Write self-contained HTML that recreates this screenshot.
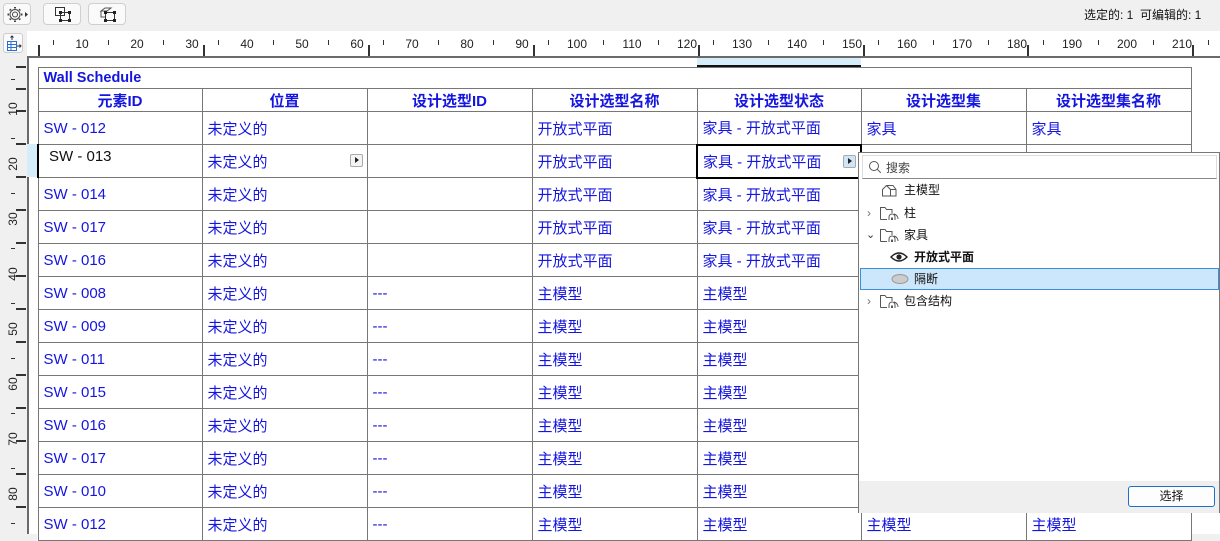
<!DOCTYPE html>
<html><head><meta charset="utf-8">
<style>
*{margin:0;padding:0;box-sizing:border-box}
body{width:1220px;height:534px;overflow:hidden;background:#f0f0f0;font-family:"Liberation Sans","Noto Sans CJK SC",sans-serif;position:relative}
.a{position:absolute}
.btn{position:absolute;top:3px;height:22px;border:1px solid #cfcfcf;border-radius:4px;background:#fafafa}
.rl{position:absolute;top:37px;font-size:12px;color:#222;width:30px;text-align:center}
.tk{position:absolute;background:#333}
.vl{position:absolute;font-size:12px;color:#222;transform:rotate(-90deg);width:24px;text-align:center}
table{position:absolute;left:37px;top:67px;border-collapse:collapse;table-layout:fixed;background:#fff}
td{border:1px solid #777;color:#1515e0;font-size:15px;padding:0 0 0 5px;white-space:nowrap;overflow:hidden;height:33px;vertical-align:middle;position:relative}
tr.h td{height:23px;font-weight:bold;text-align:center;padding:0}
tr.t td{height:21px;font-weight:bold;font-size:14.5px}
.arr{position:absolute;right:4px;top:9px;width:13px;height:13px;border:1px solid #aaa;border-radius:2px;background:#f4f4f4}
.arr:after{content:"";position:absolute;left:4px;top:2px;border-left:4px solid #222;border-top:3.5px solid transparent;border-bottom:3.5px solid transparent}
.pop{position:absolute;left:858px;top:152px;width:362px;height:361px;background:#fff;border:1px solid #777}
.it{position:absolute;left:0;width:360px;height:22px;font-size:12px;color:#111;line-height:22px}
</style></head><body>
<div class="btn" style="left:3px;width:28px"><svg class="a" style="left:3px;top:2px" width="22" height="17" viewBox="0 0 22 17"><circle cx="8" cy="8.5" r="2.5" fill="none" stroke="#444"/><path d="M8 2.5v-1.5M8 14.5v1.5M2 8.5h-1.5M14 8.5h1.5M3.8 4.3l-1-1M12.2 12.7l1 1M3.8 12.7l-1 1M12.2 4.3l1-1" stroke="#444" stroke-width="2"/><circle cx="8" cy="8.5" r="5" fill="none" stroke="#444"/><path d="M18 6l3 2.5-3 2.5z" fill="#333"/></svg></div>
<div class="btn" style="left:43px;width:38px"><svg class="a" style="left:10px;top:2px" width="18" height="17"><rect x="1.5" y="1.5" width="9" height="8" fill="none" stroke="#333"/><rect x="6.5" y="6.5" width="9" height="8" fill="none" stroke="#333"/><rect x="5" y="5" width="3" height="3" fill="#222"/><rect x="14" y="5" width="3" height="3" fill="#222"/><rect x="5" y="13" width="3" height="3" fill="#222"/><rect x="14" y="13" width="3" height="3" fill="#222"/></svg></div>
<div class="btn" style="left:88px;width:38px"><svg class="a" style="left:10px;top:2px" width="18" height="17"><path d="M2 5l4-3h6l-4 3z M2 5v6h5" fill="none" stroke="#555"/><rect x="6.5" y="6.5" width="9" height="8" fill="none" stroke="#333"/><rect x="5" y="5" width="3" height="3" fill="#222"/><rect x="14" y="5" width="3" height="3" fill="#222"/><rect x="5" y="13" width="3" height="3" fill="#222"/><rect x="14" y="13" width="3" height="3" fill="#222"/></svg></div>
<div class="a" style="left:1084px;top:6px;font-size:12px;color:#111">选定的: 1&nbsp; 可编辑的: 1</div>
<div class="a" style="left:27px;top:31px;width:1193px;height:26px;background:#fff"></div>
<div class="a" style="left:3px;top:33px;width:20px;height:20px;border:1px solid #ccc;border-radius:3px;background:#fafafa"><svg class="a" style="left:2px;top:1px" width="16" height="17"><path d="M6 1v4M4.5 2.5L6 1l1.5 1.5" stroke="#333" fill="none"/><rect x="1.5" y="6.5" width="9" height="9" fill="#fff" stroke="#2a6fd6"/><path d="M1.5 9.5h9M1.5 12.5h9M5 6.5v9" stroke="#2a6fd6"/><path d="M11 11h4M13.5 9.5L15 11l-1.5 1.5" stroke="#333" fill="none"/></svg></div>
<div class="a" style="left:27px;top:56px;width:1193px;height:478px;background:#fff;border-top:2px solid #6a6a6a;border-left:2px solid #6a6a6a"></div>
<div class="a" style="left:697px;top:58px;width:164px;height:9px;background:#d6eefa;border-bottom:2px solid #111"></div>
<div class="a" style="left:27px;top:144px;width:11px;height:33px;background:#d6eefa"></div>
<div class="tk" style="left:38px;top:45px;width:2px;height:11px"></div>
<div class="tk" style="left:203px;top:45px;width:2px;height:11px"></div>
<div class="tk" style="left:368px;top:45px;width:2px;height:11px"></div>
<div class="tk" style="left:533px;top:45px;width:2px;height:11px"></div>
<div class="tk" style="left:698px;top:45px;width:2px;height:11px"></div>
<div class="tk" style="left:863px;top:45px;width:2px;height:11px"></div>
<div class="tk" style="left:1027px;top:45px;width:2px;height:11px"></div>
<div class="tk" style="left:1192px;top:45px;width:2px;height:11px"></div>
<div class="tk" style="left:53px;top:40px;width:1px;height:5px"></div><div class="tk" style="left:108px;top:40px;width:1px;height:5px"></div><div class="tk" style="left:163px;top:40px;width:1px;height:5px"></div><div class="tk" style="left:218px;top:40px;width:1px;height:5px"></div><div class="tk" style="left:273px;top:40px;width:1px;height:5px"></div><div class="tk" style="left:328px;top:40px;width:1px;height:5px"></div><div class="tk" style="left:383px;top:40px;width:1px;height:5px"></div><div class="tk" style="left:438px;top:40px;width:1px;height:5px"></div><div class="tk" style="left:493px;top:40px;width:1px;height:5px"></div><div class="tk" style="left:548px;top:40px;width:1px;height:5px"></div><div class="tk" style="left:603px;top:40px;width:1px;height:5px"></div><div class="tk" style="left:658px;top:40px;width:1px;height:5px"></div><div class="tk" style="left:713px;top:40px;width:1px;height:5px"></div><div class="tk" style="left:768px;top:40px;width:1px;height:5px"></div><div class="tk" style="left:823px;top:40px;width:1px;height:5px"></div><div class="tk" style="left:878px;top:40px;width:1px;height:5px"></div><div class="tk" style="left:933px;top:40px;width:1px;height:5px"></div><div class="tk" style="left:988px;top:40px;width:1px;height:5px"></div><div class="tk" style="left:1043px;top:40px;width:1px;height:5px"></div><div class="tk" style="left:1098px;top:40px;width:1px;height:5px"></div><div class="tk" style="left:1153px;top:40px;width:1px;height:5px"></div><div class="tk" style="left:1208px;top:40px;width:1px;height:5px"></div>
<div class="rl" style="left:67px">10</div><div class="rl" style="left:122px">20</div><div class="rl" style="left:177px">30</div><div class="rl" style="left:232px">40</div><div class="rl" style="left:287px">50</div><div class="rl" style="left:342px">60</div><div class="rl" style="left:397px">70</div><div class="rl" style="left:452px">80</div><div class="rl" style="left:507px">90</div><div class="rl" style="left:562px">100</div><div class="rl" style="left:617px">110</div><div class="rl" style="left:672px">120</div><div class="rl" style="left:727px">130</div><div class="rl" style="left:782px">140</div><div class="rl" style="left:837px">150</div><div class="rl" style="left:892px">160</div><div class="rl" style="left:947px">170</div><div class="rl" style="left:1002px">180</div><div class="rl" style="left:1057px">190</div><div class="rl" style="left:1112px">200</div><div class="rl" style="left:1167px">210</div>
<div class="tk" style="left:16px;top:66px;width:10px;height:2px"></div><div class="tk" style="left:16px;top:88px;width:10px;height:2px"></div>
<div class="tk" style="left:16px;top:110px;width:10px;height:2px"></div><div class="tk" style="left:16px;top:143px;width:10px;height:2px"></div><div class="tk" style="left:16px;top:176px;width:10px;height:2px"></div><div class="tk" style="left:16px;top:209px;width:10px;height:2px"></div><div class="tk" style="left:16px;top:242px;width:10px;height:2px"></div><div class="tk" style="left:16px;top:275px;width:10px;height:2px"></div><div class="tk" style="left:16px;top:308px;width:10px;height:2px"></div><div class="tk" style="left:16px;top:341px;width:10px;height:2px"></div><div class="tk" style="left:16px;top:374px;width:10px;height:2px"></div><div class="tk" style="left:16px;top:407px;width:10px;height:2px"></div><div class="tk" style="left:16px;top:440px;width:10px;height:2px"></div><div class="tk" style="left:16px;top:473px;width:10px;height:2px"></div><div class="tk" style="left:16px;top:506px;width:10px;height:2px"></div>
<div class="tk" style="left:11px;top:79px;width:4px;height:1px"></div><div class="tk" style="left:11px;top:138px;width:4px;height:1px"></div><div class="tk" style="left:11px;top:193px;width:4px;height:1px"></div><div class="tk" style="left:11px;top:248px;width:4px;height:1px"></div><div class="tk" style="left:11px;top:303px;width:4px;height:1px"></div><div class="tk" style="left:11px;top:358px;width:4px;height:1px"></div><div class="tk" style="left:11px;top:413px;width:4px;height:1px"></div><div class="tk" style="left:11px;top:468px;width:4px;height:1px"></div><div class="tk" style="left:11px;top:523px;width:4px;height:1px"></div>
<div class="vl" style="left:1px;top:102px">10</div><div class="vl" style="left:1px;top:157px">20</div><div class="vl" style="left:1px;top:212px">30</div><div class="vl" style="left:1px;top:267px">40</div><div class="vl" style="left:1px;top:322px">50</div><div class="vl" style="left:1px;top:377px">60</div><div class="vl" style="left:1px;top:432px">70</div><div class="vl" style="left:1px;top:487px">80</div>
<table>
<colgroup><col style="width:164px"><col style="width:165px"><col style="width:165px"><col style="width:165px"><col style="width:164px"><col style="width:165px"><col style="width:165px"></colgroup>
<tr class="t"><td colspan="7">Wall Schedule</td></tr>
<tr class="h"><td>元素ID</td><td>位置</td><td>设计选型ID</td><td>设计选型名称</td><td>设计选型状态</td><td>设计选型集</td><td>设计选型集名称</td></tr>
<tr><td>SW - 012</td><td>未定义的</td><td></td><td>开放式平面</td><td>家具 - 开放式平面</td><td>家具</td><td>家具</td></tr>
<tr><td style="color:#111;padding-left:10px;vertical-align:top;padding-top:3px;border-left:2px solid #000">SW - 013</td><td>未定义的<span class="arr"></span></td><td></td><td>开放式平面</td><td style="border:2px solid #000">家具 - 开放式平面<span class="arr" style="background:#cfe6f8"></span></td><td></td><td></td></tr>
<tr><td>SW - 014</td><td>未定义的</td><td></td><td>开放式平面</td><td>家具 - 开放式平面</td><td></td><td></td></tr>
<tr><td>SW - 017</td><td>未定义的</td><td></td><td>开放式平面</td><td>家具 - 开放式平面</td><td></td><td></td></tr>
<tr><td>SW - 016</td><td>未定义的</td><td></td><td>开放式平面</td><td>家具 - 开放式平面</td><td></td><td></td></tr>
<tr><td>SW - 008</td><td>未定义的</td><td>---</td><td>主模型</td><td>主模型</td><td></td><td></td></tr>
<tr><td>SW - 009</td><td>未定义的</td><td>---</td><td>主模型</td><td>主模型</td><td></td><td></td></tr>
<tr><td>SW - 011</td><td>未定义的</td><td>---</td><td>主模型</td><td>主模型</td><td></td><td></td></tr>
<tr><td>SW - 015</td><td>未定义的</td><td>---</td><td>主模型</td><td>主模型</td><td></td><td></td></tr>
<tr><td>SW - 016</td><td>未定义的</td><td>---</td><td>主模型</td><td>主模型</td><td></td><td></td></tr>
<tr><td>SW - 017</td><td>未定义的</td><td>---</td><td>主模型</td><td>主模型</td><td></td><td></td></tr>
<tr><td>SW - 010</td><td>未定义的</td><td>---</td><td>主模型</td><td>主模型</td><td></td><td></td></tr>
<tr><td>SW - 012</td><td>未定义的</td><td>---</td><td>主模型</td><td>主模型</td><td>主模型</td><td>主模型</td></tr>
</table>
<div class="pop">
 <div class="a" style="left:3px;top:2px;width:355px;height:24px;border:1px solid #ddd;border-bottom:1px solid #888"><svg class="a" style="left:5px;top:4px" width="14" height="14"><circle cx="6" cy="6" r="4.5" fill="none" stroke="#555"/><path d="M9.3 9.3l3.5 3.5" stroke="#555"/></svg><span class="a" style="left:23px;top:3px;font-size:12px;color:#444">搜索</span></div>
 <div class="it" style="top:26px"><svg class="a" style="left:22px;top:5px" width="16" height="13"><path d="M1.5 12V5.5L5.5 1.5H12L15 5.5V12H1.5z M5.5 1.5L9.5 5.5V12 M9.5 5.5H15" fill="none" stroke="#555"/></svg><span class="a" style="left:45px">主模型</span></div>
 <div class="it" style="top:49px"><span class="a" style="left:8px;color:#777">›</span><svg class="a" style="left:20px;top:4px" width="20" height="15"><path d="M1.5 13.5V1.5H6l1.5 2H13V7" fill="none" stroke="#555"/><path d="M1.5 13.5H8M10 14v-3a3 3 0 016 0v3M12.5 14v-2a1 1 0 011 0v2M15 8a5 5 0 014 5" fill="none" stroke="#555"/></svg><span class="a" style="left:45px">柱</span></div>
 <div class="it" style="top:71px"><span class="a" style="left:7px;color:#333;font-size:11px">⌄</span><svg class="a" style="left:20px;top:4px" width="20" height="15"><path d="M1.5 13.5V1.5H6l1.5 2H13V7" fill="none" stroke="#555"/><path d="M1.5 13.5H8M10 14v-3a3 3 0 016 0v3M12.5 14v-2a1 1 0 011 0v2M15 8a5 5 0 014 5" fill="none" stroke="#555"/></svg><span class="a" style="left:45px">家具</span></div>
 <div class="it" style="top:93px"><svg class="a" style="left:31px;top:5px" width="18" height="12"><path d="M1 6Q9 -2 17 6Q9 14 1 6z" fill="none" stroke="#222" stroke-width="1.4"/><circle cx="9" cy="6" r="2.6" fill="#222"/></svg><span class="a" style="left:55px;font-weight:bold">开放式平面</span></div>
 <div class="it" style="top:115px;background:#cce6fb;border:1px solid #3a8fdc;left:1px;width:359px"><svg class="a" style="left:30px;top:4px" width="18" height="12"><ellipse cx="9" cy="6" rx="8" ry="4.5" fill="#ccc" stroke="#999"/></svg><span class="a" style="left:53px;top:-1px">隔断</span></div>
 <div class="it" style="top:137px"><span class="a" style="left:8px;color:#777">›</span><svg class="a" style="left:20px;top:4px" width="20" height="15"><path d="M1.5 13.5V1.5H6l1.5 2H13V7" fill="none" stroke="#555"/><path d="M1.5 13.5H8M10 14v-3a3 3 0 016 0v3M12.5 14v-2a1 1 0 011 0v2M15 8a5 5 0 014 5" fill="none" stroke="#555"/></svg><span class="a" style="left:45px">包含结构</span></div>
 <div class="a" style="left:0;top:328px;width:360px;height:32px;background:#efefef"></div>
 <div class="a" style="left:269px;top:333px;width:87px;height:21px;border:1px solid #1a6fd0;border-radius:3px;background:#fdfdfd;font-size:12px;text-align:center;line-height:19px;color:#111">选择</div>
</div>
</body></html>
